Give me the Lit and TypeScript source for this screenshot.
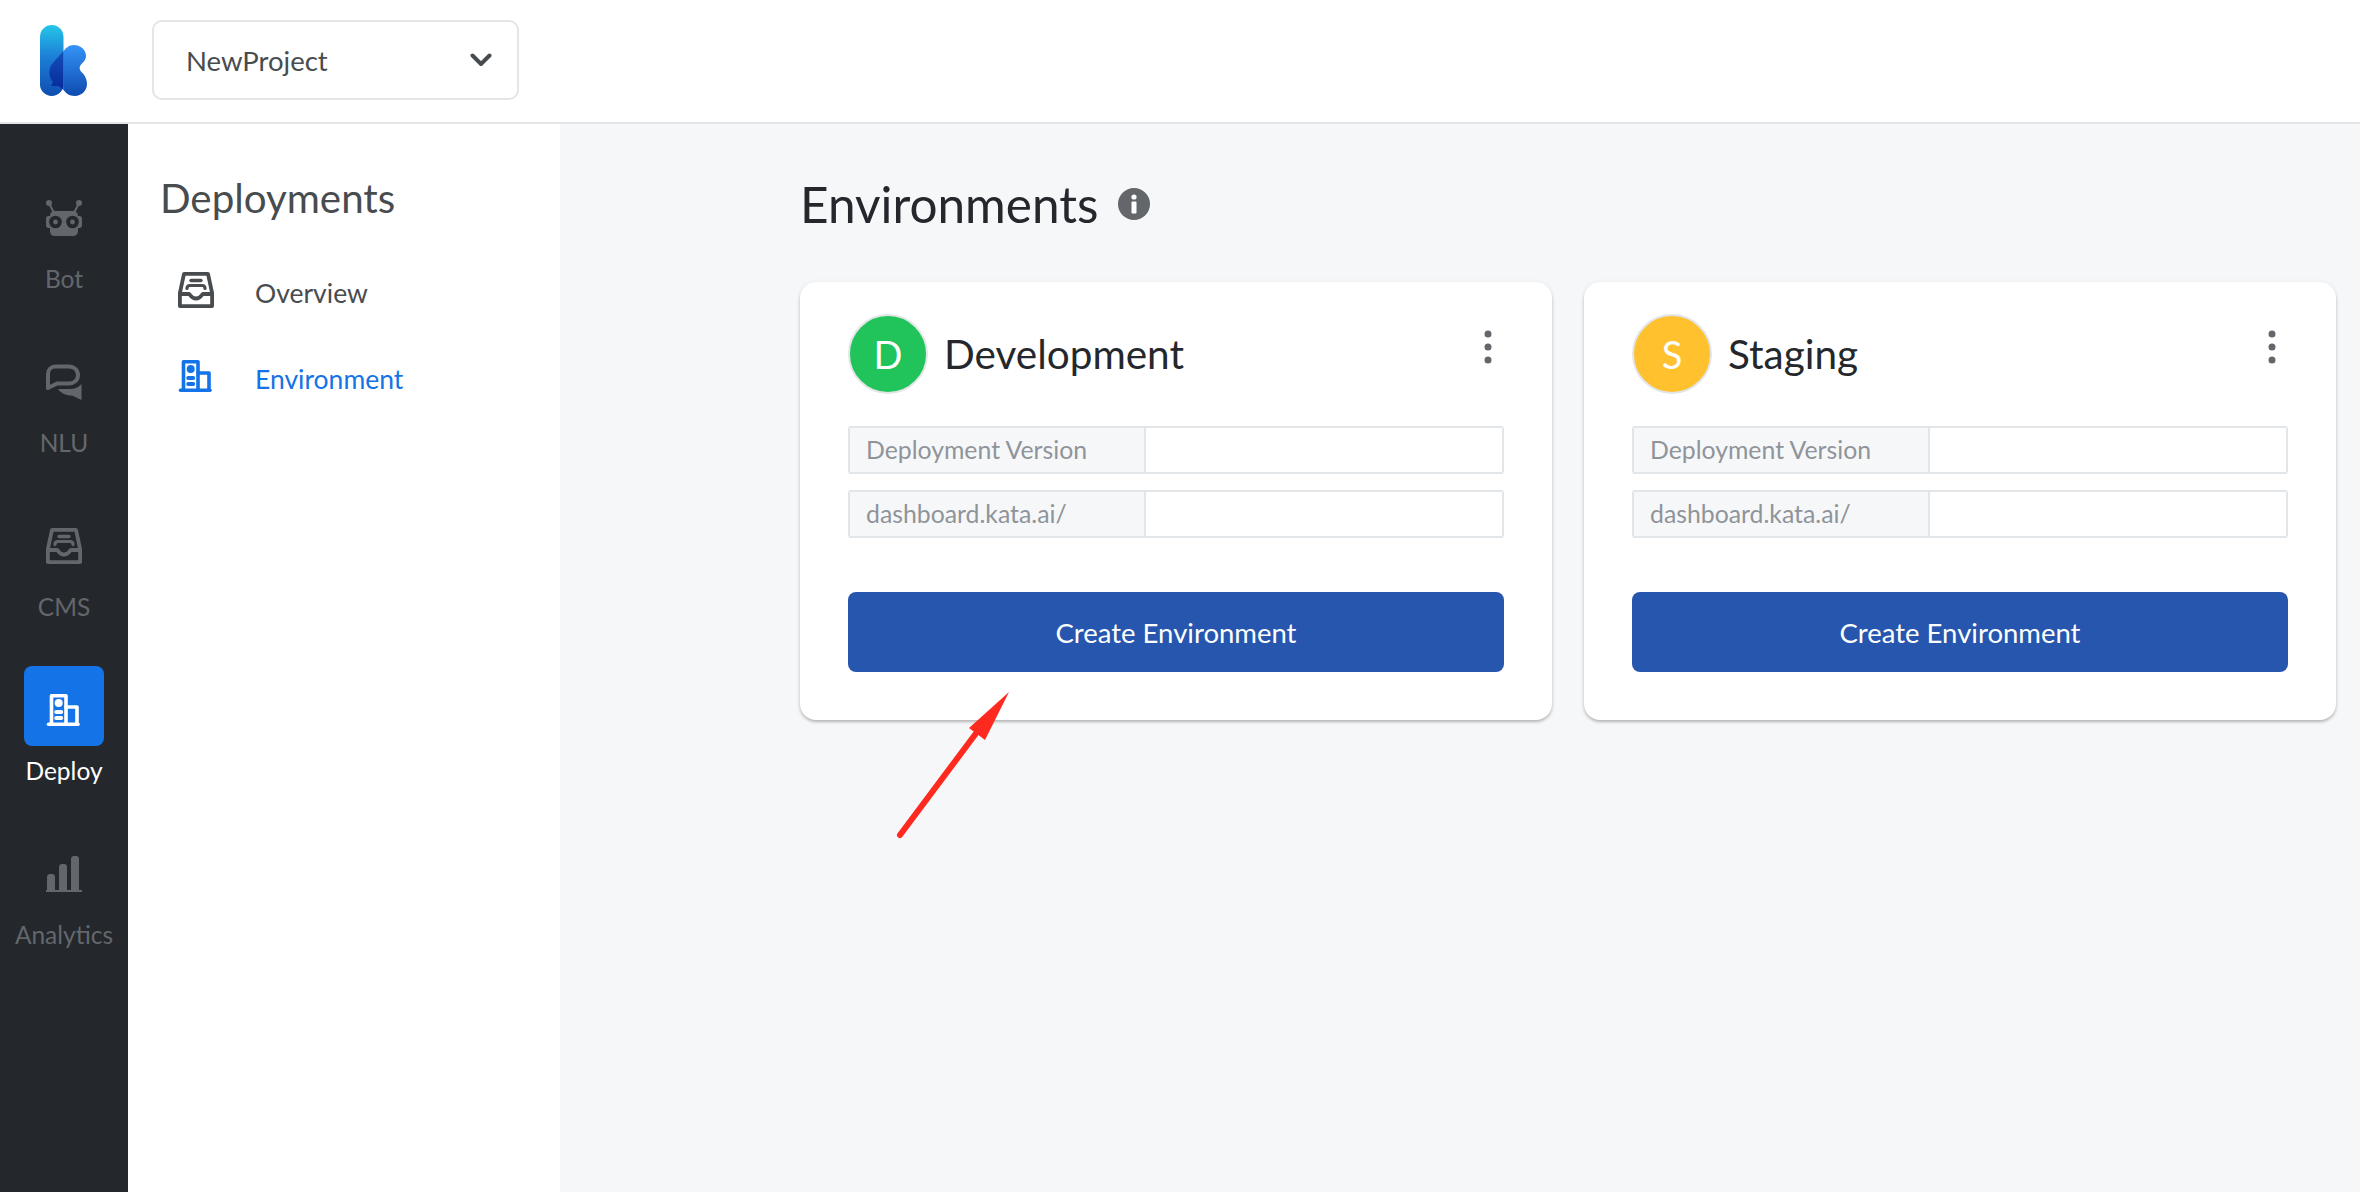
import { LitElement, html, css, svg } from "lit";
import { customElement } from "lit/decorators.js";

const botIcon = svg`
  <path d="M3 3L8 13M33 3L28 13" fill="none" stroke="currentColor" stroke-width="2" />
  <circle cx="3" cy="3" r="3" fill="currentColor" />
  <circle cx="33" cy="3" r="3" fill="currentColor" />
  <path fill="currentColor" d="M9 11h18c3 0 5 2 5 5h1.500c1.500 0 2.500 1 2.500 2.500v7c0 1.500-1 2.500-2.500 2.500H32v3c0 3-2 5-5 5H9c-3 0-5-2-5-5v-3H2.500C1 28 0 27 0 25.500v-7C0 17 1 16 2.500 16H4c0-3 2-5 5-5z" />
  <circle cx="9.500" cy="22" r="6.300" fill="#24282d" />
  <circle cx="26.500" cy="22" r="6.300" fill="#24282d" />
  <circle cx="9.500" cy="22" r="2.400" fill="currentColor" />
  <circle cx="26.500" cy="22" r="2.400" fill="currentColor" />
`;

const chatIcon = svg`
  <path fill="none" stroke="currentColor" stroke-width="4" stroke-linejoin="round"
    d="M9.500 2.500H23C28 2.500 32 6 32 11C32 16 28 19.500 23 19.500H11L2 24V10C2 5.500 5 2.500 9.500 2.500Z" />
  <path fill="currentColor" d="M12 25H24C29 25 33 23 35.500 20V36L26 31.500C19 31.500 15 29 12 25Z" />
`;

const trayIcon = svg`
  <g fill="none" stroke="currentColor" stroke-linejoin="round" stroke-linecap="round">
    <path stroke-width="3.800" d="M6 1.900H30L34.100 21V34.100H1.900V21Z" />
    <path stroke-width="3.800" d="M1.900 22H11C12.500 22 12.500 26.500 18 26.500C23.500 26.500 23.500 22 25 22H34.100" />
    <path stroke-width="3.400" d="M13 8.500H23" />
    <path stroke-width="3.200" d="M9 16.500C9 14 10 13.500 12 13.500H24C26 13.500 27 14 27 16.500" />
  </g>
`;

const buildingIcon = svg`
  <g fill="none" stroke="currentColor" stroke-width="3.600" stroke-linecap="round">
    <path d="M5.500 32V3.800H20V32" stroke-linejoin="round" />
    <path d="M20 15H31V32" stroke-linejoin="round" />
    <path d="M2.500 32.300H32" />
  </g>
  <g fill="currentColor">
    <circle cx="12.700" cy="11" r="4" />
    <rect x="8.200" y="18" width="9" height="4" rx="2" />
    <rect x="8.200" y="24" width="9" height="4" rx="2" />
  </g>
`;

const barsIcon = svg`
  <g fill="currentColor">
    <path d="M1 34V21c0-1.700 1.300-3 3-3h2c1.700 0 3 1.300 3 3v13z" />
    <path d="M13 34V11c0-1.700 1.300-3 3-3h2c1.700 0 3 1.300 3 3v23z" />
    <path d="M25 34V3c0-1.700 1.300-3 3-3h2c1.700 0 3 1.300 3 3v31z" />
    <rect x="0" y="34" width="36" height="2" />
  </g>
`;

const railItems = [
  { label: "Bot", icon: botIcon },
  { label: "NLU", icon: chatIcon },
  { label: "CMS", icon: trayIcon },
  { label: "Deploy", icon: buildingIcon, active: true },
  { label: "Analytics", icon: barsIcon },
];

const environments = [
  { name: "Development", letter: "D", color: "#20c45a" },
  { name: "Staging", letter: "S", color: "#ffc12e" },
];

@customElement("app-root")
export class AppRoot extends LitElement {
  static styles = css`
    :host {
      display: flex;
      flex-direction: column;
      position: relative;
      height: 100vh;
      overflow: hidden;
      font-family: Lato, "Open Sans", sans-serif;
      background: #fff;
    }

    .header {
      display: flex;
      align-items: center;
      box-sizing: border-box;
      flex: none;
      height: 124px;
      padding: 0 0 2px 40px;
      border-bottom: 2px solid #e2e6e8;
    }

    .logo {
      width: 47px;
      height: 71px;
      margin-right: 65px;
    }

    .select {
      display: flex;
      align-items: center;
      justify-content: space-between;
      box-sizing: border-box;
      width: 367px;
      height: 80px;
      padding: 0 25px 0 32px;
      border: 2px solid #e2e6e8;
      border-radius: 10px;
      color: #484c4f;
      font-size: 27.500px;
    }

    .select svg {
      width: 22px;
      height: 14px;
    }

    .body {
      display: flex;
      flex: 1;
      min-height: 0;
    }

    .rail {
      display: flex;
      flex-direction: column;
      align-items: center;
      gap: 45px;
      box-sizing: border-box;
      flex: none;
      width: 128px;
      padding-top: 50px;
      background: #24282d;
    }

    .rail-item {
      display: flex;
      flex-direction: column;
      align-items: center;
      gap: 11px;
      color: #63676b;
      font-size: 24.500px;
      line-height: 28px;
    }

    .rail-icon {
      display: flex;
      justify-content: center;
      box-sizing: border-box;
      width: 80px;
      height: 80px;
      padding-top: 26px;
      border-radius: 8px;
    }

    .rail-icon svg {
      width: 36px;
      height: 36px;
    }

    .rail-item.active {
      color: #fff;
    }

    .rail-item.active .rail-icon {
      background: #1473e6;
    }

    .subnav {
      box-sizing: border-box;
      flex: none;
      width: 432px;
      padding: 52px 0 0 32px;
    }

    .subnav h2 {
      margin: 0 0 52px;
      color: #484c4f;
      font-size: 40.300px;
      font-weight: 400;
      line-height: 44px;
    }

    .subnav-list {
      display: flex;
      flex-direction: column;
      gap: 50px;
      padding-left: 18px;
    }

    .subnav-item {
      display: flex;
      gap: 41px;
      height: 36px;
      color: #484c4f;
      font-size: 26.500px;
      line-height: 36px;
    }

    .subnav-item span {
      margin-top: 3px;
    }

    .subnav-item svg {
      width: 36px;
      height: 36px;
    }

    .subnav-item.active {
      color: #1473e6;
    }

    .main {
      flex: 1;
      box-sizing: border-box;
      padding: 50px 24px 0 240px;
      background: #f6f7f9;
    }

    .title {
      display: flex;
      align-items: center;
      gap: 20px;
      margin: 0 0 48px;
      color: #24282d;
      font-size: 49.500px;
      font-weight: 400;
      line-height: 60px;
    }

    .title svg {
      width: 32px;
      height: 32px;
    }

    .cards {
      display: grid;
      grid-template-columns: 752px 752px;
      gap: 32px;
    }

    .card {
      box-sizing: border-box;
      height: 438px;
      padding: 32px 48px 48px;
      border-radius: 16px;
      background: #fff;
      box-shadow: 0 2px 3px rgba(0, 0, 0, 0.25), 0 0 6px rgba(0, 0, 0, 0.04);
    }

    .card-head {
      display: flex;
      align-items: center;
      gap: 16px;
      height: 79px;
      margin-bottom: 33px;
    }

    .avatar {
      display: flex;
      align-items: center;
      justify-content: center;
      box-sizing: border-box;
      flex: none;
      width: 80px;
      height: 80px;
      border: 2px solid #e2e6e8;
      border-radius: 50%;
      color: #fff;
      font-size: 38px;
    }

    .card-name {
      flex: 1;
      color: #24282d;
      font-size: 40.500px;
    }

    .kebab {
      width: 8px;
      height: 34px;
      margin: 0 12px 14px 0;
      color: #63676b;
    }

    .field {
      display: flex;
      box-sizing: border-box;
      height: 48px;
      margin-bottom: 16px;
      border: 2px solid #e2e6e8;
      border-radius: 3px;
    }

    .field-label {
      box-sizing: border-box;
      width: 296px;
      padding-left: 16px;
      border-right: 2px solid #e2e6e8;
      background: #f6f7f9;
      color: #8f9499;
      font-size: 24.800px;
      line-height: 44px;
    }

    .create {
      display: block;
      box-sizing: border-box;
      width: 100%;
      height: 80px;
      margin-top: 54px;
      border: none;
      border-radius: 8px;
      background: #2656ad;
      color: #fff;
      font-family: inherit;
      font-size: 27.500px;
    }

    .arrow {
      position: absolute;
      left: 890px;
      top: 685px;
      width: 130px;
      height: 160px;
    }
  `;

  private renderLogo() {
    return html`
      <svg class="logo" viewBox="0 0 47 71">
        <defs>
          <linearGradient id="stem" x1="0" y1="0" x2="0" y2="1">
            <stop offset="0" stop-color="#24c6e8" />
            <stop offset="0.45" stop-color="#1c7fd6" />
            <stop offset="1" stop-color="#0f4db2" />
          </linearGradient>
          <linearGradient id="arm" x1="0" y1="0" x2="0" y2="1">
            <stop offset="0" stop-color="#3594f8" />
            <stop offset="1" stop-color="#0e4bb0" />
          </linearGradient>
          <linearGradient id="fold" x1="0" y1="0" x2="0" y2="1">
            <stop offset="0" stop-color="#1450bb" />
            <stop offset="1" stop-color="#07299a" />
          </linearGradient>
        </defs>
        <rect width="23.500" height="71" rx="11.750" fill="url(#stem)" />
        <path fill="url(#arm)" d="M34 20C41 20 46 25 46 31C46 34 44.500 36 42 38.500C39 41.500 39 44 41.500 47C44 49.500 47 53 47 59C47 66 41 71 35 71C29 71 26 68 23.500 65V26C26 23 29 20 34 20Z" />
        <path fill="url(#fold)" d="M23.500 26L12 39C8 44 9 53 13 57L11 61H18C20 62 22 63.500 23.500 65Z" />
      </svg>
    `;
  }

  private renderCard(env: { name: string; letter: string; color: string }) {
    return html`
      <div class="card">
        <div class="card-head">
          <div class="avatar" style="background: ${env.color}">${env.letter}</div>
          <div class="card-name">${env.name}</div>
          <svg class="kebab" viewBox="0 0 8 34">
            <circle cx="4" cy="4" r="3.500" fill="currentColor" />
            <circle cx="4" cy="17" r="3.500" fill="currentColor" />
            <circle cx="4" cy="30" r="3.500" fill="currentColor" />
          </svg>
        </div>
        <div class="field"><div class="field-label">Deployment Version</div></div>
        <div class="field"><div class="field-label">dashboard.kata.ai/</div></div>
        <button class="create">Create Environment</button>
      </div>
    `;
  }

  render() {
    return html`
      <div class="header">
        ${this.renderLogo()}
        <div class="select">
          <span>NewProject</span>
          <svg viewBox="0 0 22 14">
            <path d="M2.500 2.500L11 11L19.500 2.500" fill="none" stroke="#484c4f" stroke-width="4" stroke-linecap="round" stroke-linejoin="round" />
          </svg>
        </div>
      </div>
      <div class="body">
        <nav class="rail">
          ${railItems.map(
            (item) => html`
              <div class="rail-item ${item.active ? "active" : ""}">
                <div class="rail-icon"><svg viewBox="0 0 36 36">${item.icon}</svg></div>
                <span>${item.label}</span>
              </div>
            `
          )}
        </nav>
        <aside class="subnav">
          <h2>Deployments</h2>
          <div class="subnav-list">
            <div class="subnav-item"><svg viewBox="0 0 36 36">${trayIcon}</svg><span>Overview</span></div>
            <div class="subnav-item active"><svg viewBox="0 0 36 36">${buildingIcon}</svg><span>Environment</span></div>
          </div>
        </aside>
        <main class="main">
          <h1 class="title">
            Environments
            <svg viewBox="0 0 32 32">
              <circle cx="16" cy="16" r="16" fill="#63676b" />
              <circle cx="16" cy="9" r="2.600" fill="#fff" />
              <rect x="13.500" y="13.500" width="5" height="12" rx="1" fill="#fff" />
            </svg>
          </h1>
          <div class="cards">${environments.map((env) => this.renderCard(env))}</div>
        </main>
      </div>
      <svg class="arrow" viewBox="890 685 130 160">
        <path d="M900 835L977 732" stroke="#ff2a1f" stroke-width="6" stroke-linecap="round" />
        <path d="M1009 692L969 728L985 740Z" fill="#ff2a1f" />
      </svg>
    `;
  }
}
